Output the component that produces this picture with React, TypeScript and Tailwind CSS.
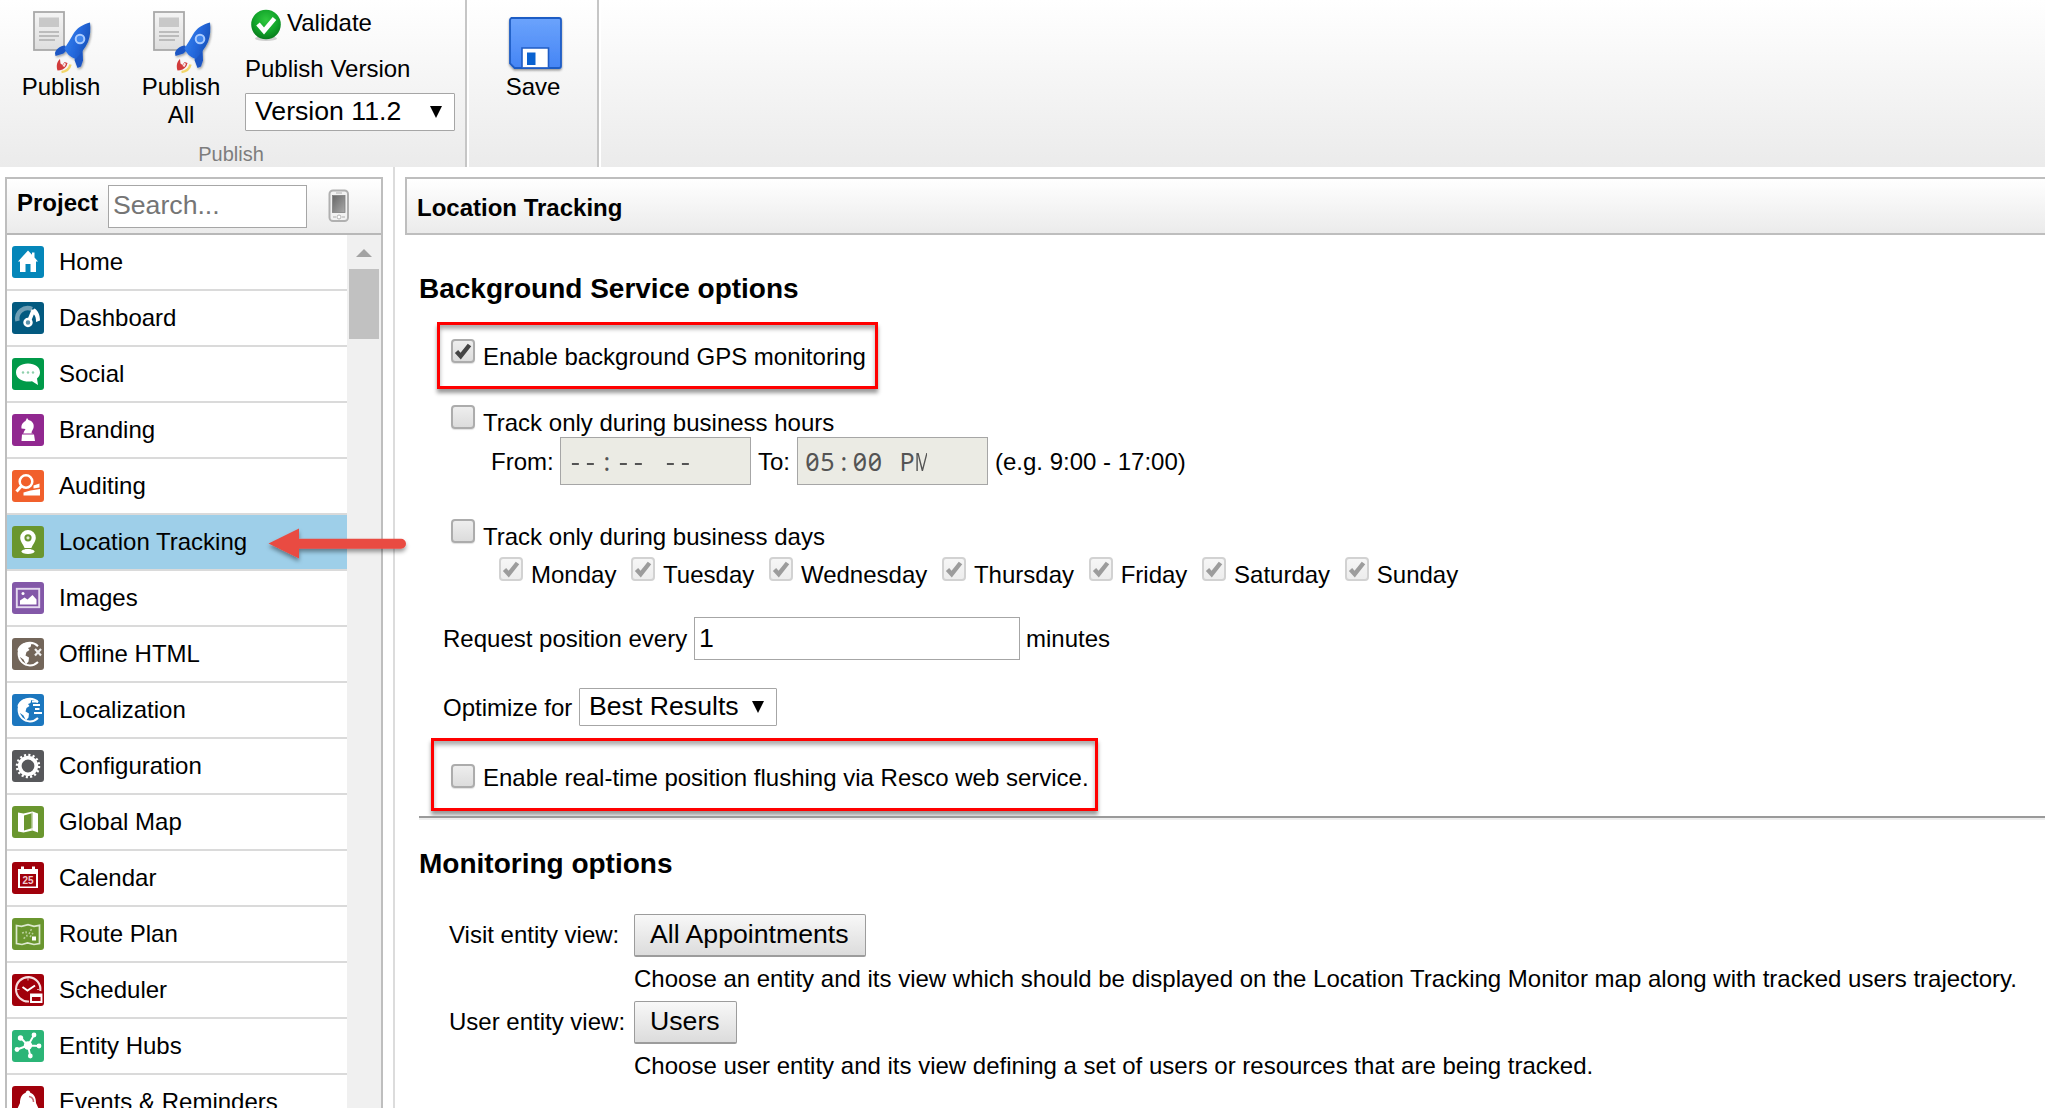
import React from 'react';

type IconProps = { children: React.ReactNode; bg: string };

function Tile({ children, bg }: IconProps) {
  return (
    <svg width="32" height="32" viewBox="0 0 32 32" className="shrink-0">
      <rect width="32" height="32" rx="3" fill={bg} />
      {children}
    </svg>
  );
}

const globe = (
  <>
    <path d="M26 8.200A11.300 11.300 0 1 0 26 24" fill="none" stroke="#fff" strokeWidth="2" />
    <path d="M5.500 12c1-4 4.500-7 9-7.500l5 1-1 3.500-2.500 1 1.500 2-3 2-1 3.500 3.500 2-.5 4-2.500 3-2.500-5-3.500-2.500z" fill="#fff" />
  </>
);

const items: { label: string; icon: React.ReactNode; active?: boolean }[] = [
  {
    label: 'Home',
    icon: (
      <Tile bg="#0486b9">
        <path d="M16 4.500 6 15.500h2V26h5.500v-8h5v8H24V15.500h2L22.500 11.500V6.500h-2.500v2.300z" fill="#fff" />
      </Tile>
    ),
  },
  {
    label: 'Dashboard',
    icon: (
      <Tile bg="#035a80">
        <path d="M5.500 19A10.500 10.500 0 0 1 20 7" fill="none" stroke="#6f9fb5" strokeWidth="4.500" />
        <path d="M19 9.500 22.500 6.500c3.500 2 5.500 6.500 5.500 12l-4 1.500c0-4-.5-6-2.500-8z" fill="#fff" />
        <path d="M21.500 8 17 19" stroke="#fff" strokeWidth="4" />
        <circle cx="16" cy="20.500" r="3.500" fill="#5e93ab" stroke="#fff" strokeWidth="2.500" />
      </Tile>
    ),
  },
  {
    label: 'Social',
    icon: (
      <Tile bg="#009a49">
        <path d="M16 5.500c7 0 12 3.500 12 9 0 2.500-1.200 4.500-3 6l1 6.500-6-3.700c-7.500 1.200-16-1.800-16-8.800 0-5.500 5-9 12-9z" fill="#fff" />
        <g fill="#8fd0ac"><circle cx="11" cy="14.500" r="1.200" /><circle cx="16" cy="14.500" r="1.200" /><circle cx="21" cy="14.500" r="1.200" /></g>
      </Tile>
    ),
  },
  {
    label: 'Branding',
    icon: (
      <Tile bg="#912890">
        <path d="M15 4l1.500 2c4 1 6 4 5 8-.5 2-2 3-2 5.500h-8c0-2 1.500-3 2-4.500l-4-.5c-.5-4 1.500-6 4-7.500z" fill="#fff" />
        <path d="M10 20.500h12l1 6.500H9.500z" fill="#fff" />
        <path d="M11 20h10" stroke="#c98cc8" strokeWidth="1" />
      </Tile>
    ),
  },
  {
    label: 'Auditing',
    icon: (
      <Tile bg="#f1602c">
        <circle cx="14" cy="11.500" r="6.300" fill="none" stroke="#fff" strokeWidth="2.500" />
        <path d="M9.500 16 4.500 21.500" stroke="#fff" strokeWidth="3" />
        <path d="M11.500 25.500v-3l7-2 9.500-1.500v6.500zM21.500 15.500l6-2v4l-6 1z" fill="#fff" />
      </Tile>
    ),
  },
  {
    label: 'Location Tracking',
    active: true,
    icon: (
      <Tile bg="#6a962f">
        <path d="M16 4a7.800 7.800 0 0 1 7.800 7.800c0 4-3.500 7-5 12h-5.600c-1.500-5-5-8-5-12A7.800 7.800 0 0 1 16 4z" fill="#fff" />
        <circle cx="16" cy="11.800" r="3.600" fill="#6a962f" />
        <circle cx="16" cy="11.800" r="1.600" fill="#dfe9d2" />
        <ellipse cx="16" cy="25.500" rx="6.500" ry="2.500" fill="#fff" />
        <path d="M12 22.500h8" stroke="#6a962f" strokeWidth="1" />
      </Tile>
    ),
  },
  {
    label: 'Images',
    icon: (
      <Tile bg="#8358a8">
        <rect x="4.800" y="6.800" width="22.400" height="18.400" fill="none" stroke="#e4d9ee" strokeWidth="1.900" />
        <path d="M8 22.500v-4l4.500-3 3 2 5-4.500 4 4.500v5z" fill="#fff" />
        <circle cx="11" cy="11.500" r="1.500" fill="#fff" />
      </Tile>
    ),
  },
  {
    label: 'Offline HTML',
    icon: (
      <Tile bg="#73665a">
        {globe}
        <path d="m23 11 6 6.500m0-6.500-6 6.500" stroke="#eee" strokeWidth="2.200" />
      </Tile>
    ),
  },
  {
    label: 'Localization',
    icon: (
      <Tile bg="#1c77bf">
        {globe}
        <path d="M20 7.500h6M21 11h7M23 15h4.500M22 19h8" stroke="#fff" strokeWidth="1.800" />
      </Tile>
    ),
  },
  {
    label: 'Configuration',
    icon: (
      <Tile bg="#57585b">
        <circle cx="16" cy="16" r="11" fill="none" stroke="#fff" strokeWidth="2.500" strokeDasharray="2.100 2.220" />
        <circle cx="16" cy="16" r="8.300" fill="none" stroke="#fff" strokeWidth="3.800" />
      </Tile>
    ),
  },
  {
    label: 'Global Map',
    icon: (
      <Tile bg="#6a962f">
        <path d="m6 6.500 5.500 1L20.500 5.500l5.500 2v19l-5.500-2-9 2-5.500-1z" fill="#fff" />
        <path d="m12 9.500 8.500-2.500v15L12 24.500z" fill="#6a962f" />
        <path d="M20 6v18" stroke="#d3e1c2" strokeWidth="1" />
      </Tile>
    ),
  },
  {
    label: 'Calendar',
    icon: (
      <Tile bg="#a1000b">
        <path d="M6 7h3V4.500h3V7h8V4.500h3V7h3v19H6z" fill="#fff" />
        <path d="M8 12h16v12.500H8z" fill="#a1000b" />
        <text x="16" y="22" textAnchor="middle" fontSize="10" fontWeight="700" fill="#f0cccf" fontFamily="Liberation Sans, sans-serif">25</text>
      </Tile>
    ),
  },
  {
    label: 'Route Plan',
    icon: (
      <Tile bg="#6a962f">
        <path d="m4.500 7.500 5 .8 6.500-1.600 6 1.600 5.500-1V25.500l-5.500 1-6.500-1.500-5.500 1.500-5.500-1z" fill="none" stroke="#dce8cd" strokeWidth="1.700" />
        <path d="m10 15 4-1 1 4-4 3m6-5 3-6m-2 9 3-4" fill="none" stroke="#b8cf9a" strokeWidth="1.500" strokeDasharray="2 1.500" />
        <rect x="20" y="18.500" width="4" height="4" fill="#fff" />
      </Tile>
    ),
  },
  {
    label: 'Scheduler',
    icon: (
      <Tile bg="#a1000b">
        <path d="M17 27.500A12.200 12.200 0 1 1 28.300 17" fill="none" stroke="#f6dfe0" strokeWidth="2.100" />
        <path d="m10.500 13 5 3.500L23 11.500" fill="none" stroke="#fff" strokeWidth="2" />
        <path d="M16 4v2.500M5 15.500h2.500M25 15.500h2" stroke="#dfa0a4" strokeWidth="1.200" />
        <path d="M19 20.500h10.500V28H19zM19 22h10.500" fill="none" stroke="#fff" strokeWidth="1.900" />
      </Tile>
    ),
  },
  {
    label: 'Entity Hubs',
    icon: (
      <Tile bg="#2bb577">
        <path d="m16 15.500 6-10.500M16 15.500 28 16M16 15.500 18.500 27M16 15.500 5 19.500M16 15.500 8.500 7.500" stroke="#fff" strokeWidth="1.900" />
        <circle cx="16" cy="15.500" r="4.200" fill="#fff" />
        <g fill="#fff"><circle cx="22" cy="5" r="2.400" /><circle cx="27" cy="16" r="2.400" /><circle cx="18.300" cy="26" r="2.400" /><circle cx="5" cy="19.500" r="2.400" /><circle cx="8.500" cy="8" r="2.700" /></g>
      </Tile>
    ),
  },
  {
    label: 'Events & Reminders',
    icon: (
      <Tile bg="#a1000b">
        <path d="M16 4.500c1.300 0 2 1 2.300 2.200C23 8.500 24 13 24 17l3 6.500H5L8 17c0-4 1-8.500 5.700-10.300C14 5.500 14.700 4.500 16 4.500z" fill="#fff" />
        <path d="M17 10.500c3 .5 4.500 2.500 4.500 5.500" fill="none" stroke="#c46a70" strokeWidth="1.500" />
      </Tile>
    ),
  },
];

function PublishIcon() {
  return (
    <svg width="64" height="66" viewBox="0 0 64 66">
      <defs>
        <linearGradient id="doc" x1="0" y1="0" x2="0" y2="1">
          <stop offset="0" stopColor="#f4f4f4" />
          <stop offset="1" stopColor="#dedede" />
        </linearGradient>
        <linearGradient id="hull" x1="0" y1="0.300" x2="1" y2="0.700">
          <stop offset="0" stopColor="#3580ee" />
          <stop offset="0.500" stopColor="#2468dc" />
          <stop offset="1" stopColor="#174fb4" />
        </linearGradient>
        <filter id="soft" x="-20%" y="-20%" width="150%" height="150%">
          <feDropShadow dx="1" dy="1.500" stdDeviation="1.300" floodOpacity="0.350" />
        </filter>
      </defs>
      <rect x="2" y="1" width="30" height="38" fill="url(#doc)" stroke="#a9a9a9" strokeWidth="1.800" />
      <rect x="7" y="6.500" width="20" height="9.500" fill="#c8c8c8" />
      <path d="M7 21h20M7 25h20M7 29h16" stroke="#adadad" strokeWidth="1.500" />
      <g filter="url(#soft)">
        <path d="M33 34.500c-5 .5-9 3.500-10 7.500l.5 3 8-2.500 4-4z" fill="#1b57c4" />
        <path d="m50.500 37.500.5 12-2 6-3.500 1.500-3-8 2-6z" fill="#1b57c4" />
        <path d="M58 11.500c-7 2-13.500 5.500-17 12-3 5-5.500 9.500-8.500 14 2 5 5.500 8.500 11 10.500 5-5 9.500-10.500 12.500-17 2.300-6 2.800-12.500 2-19.500z" fill="url(#hull)" />
        <circle cx="48" cy="28" r="4.300" fill="#3f86ee" stroke="#a9cbff" strokeWidth="2" />
      </g>
      <path d="M28 48c-3 2.500-4 6.500-2.500 11.500 3.500 0 7-1.500 9-4.500l1-3-3-1-2 3-2-1.500z" fill="#d13b3b" />
      <path d="m30.500 55 2-3.500 1.500 1.500-1.500 3z" fill="#f6e3e3" />
      <path d="M29.500 61c4.500-.5 8-3.500 9-7.500" fill="none" stroke="#f3d66a" strokeWidth="2.500" />
    </svg>
  );
}

function ValidIcon() {
  return (
    <svg width="32" height="33" viewBox="0 0 32 33">
      <defs>
        <radialGradient id="ok" cx="0.500" cy="0.350" r="0.650">
          <stop offset="0" stopColor="#2fc83e" />
          <stop offset="0.600" stopColor="#12a42a" />
          <stop offset="1" stopColor="#087a1c" />
        </radialGradient>
      </defs>
      <ellipse cx="16" cy="29.500" rx="11" ry="2.500" fill="#cfcfcf" />
      <circle cx="16" cy="15.500" r="14.800" fill="url(#ok)" />
      <path d="m8 15 6 7L24.500 9.500" fill="none" stroke="#fff" strokeWidth="4.600" />
    </svg>
  );
}

function SaveIcon() {
  return (
    <svg width="60" height="58" viewBox="0 0 60 58">
      <defs>
        <linearGradient id="disk" x1="0" y1="0" x2="0" y2="1">
          <stop offset="0" stopColor="#6ba3fc" />
          <stop offset="1" stopColor="#4585f5" />
        </linearGradient>
        <filter id="diskShadow" x="-10%" y="-10%" width="125%" height="125%">
          <feDropShadow dx="0" dy="1.500" stdDeviation="1.200" floodOpacity="0.400" />
        </filter>
      </defs>
      <g filter="url(#diskShadow)">
        <path d="M6 3h48a2 2 0 0 1 2 2v46a2 2 0 0 1-2 2H9.500L5 48.500V5a2 2 0 0 1 2-2z" fill="url(#disk)" stroke="#1f5cc4" strokeWidth="1.800" />
      </g>
      <path d="M17 52.500V33h26.500v19.500" fill="#fff" stroke="#1f5cc4" strokeWidth="1.600" />
      <rect x="22" y="37.500" width="8.500" height="12.500" fill="#0a62d0" />
      <path d="M16.500 53h27.500" stroke="#1f5cc4" strokeWidth="1.400" />
    </svg>
  );
}

function PhoneIcon() {
  return (
    <svg width="22" height="34" viewBox="0 0 22 34">
      <defs>
        <linearGradient id="screen" x1="0" y1="0" x2="1" y2="1">
          <stop offset="0" stopColor="#666" />
          <stop offset="1" stopColor="#aaa" />
        </linearGradient>
      </defs>
      <rect x="1.500" y="1.500" width="18.500" height="30.500" rx="3.500" fill="#f2f2f2" stroke="#b0b0b0" strokeWidth="2" />
      <rect x="4.500" y="6.500" width="12.500" height="17" fill="url(#screen)" stroke="#808080" strokeWidth="0.800" />
      <path d="M8 4h6" stroke="#bbb" strokeWidth="1.200" />
      <circle cx="11" cy="28" r="2" fill="#fff" stroke="#b5b5b5" strokeWidth="1" />
      <path d="M5 28h3M14 28h3" stroke="#c5c5c5" strokeWidth="1.500" />
    </svg>
  );
}

function Check({ checked = false, disabled = false }: { checked?: boolean; disabled?: boolean }) {
  return (
    <span
      className={
        'flex h-6 w-6 shrink-0 items-center justify-center rounded-[4px] border-2 bg-gradient-to-b ' +
        (disabled
          ? 'border-[#d2d2d2] from-[#f6f6f6] to-[#ededed]'
          : 'border-[#acacac] from-[#eeeeee] to-[#dcdcdc] shadow-[0_1px_1px_rgba(0,0,0,0.12)]')
      }
    >
      {checked && (
        <svg width="20" height="20" viewBox="0 0 20 20">
          <path d="m3.500 10.500 4.200 4.700L16.500 4" fill="none" stroke={disabled ? '#9c9c9c' : '#444'} strokeWidth="4.400" />
        </svg>
      )}
    </span>
  );
}

function SelectBox({ label, className }: { label: string; className: string }) {
  return (
    <div className={'flex h-[38px] items-start justify-between rounded-[1px] border border-[#a6a6a6] bg-white pl-[9px] pr-3 text-[26.67px] leading-[34px] ' + className}>
      <span>{label}</span>
      <svg width="12" height="12" viewBox="0 0 12 12" className="mt-3">
        <path d="M0 0h12L6 12z" fill="#000" />
      </svg>
    </div>
  );
}

function charCell(c: string) {
  if (c === ':') return 'w-[17.5px]';
  if (c === ' ') return 'w-[17px]';
  if (c === '-') return 'w-[15px] scale-x-[1.15]';
  if (c === 'M') return 'w-[15px] scale-x-[0.68]';
  return 'w-[15px]';
}

function TimeBox({ value }: { value: string }) {
  return (
    <div className="h-12 w-[191px] border border-[#a6a6a6] bg-[#ebebe4] pl-[7px]">
      <div className="flex w-[122px] overflow-hidden pt-[5px] font-['Noto_Sans','Open_Sans',sans-serif] text-[25px] leading-[36px] text-[#545454] [font-feature-settings:'zero'_1]">
        {value.split('').map((c, i) => (
          <span key={i} className={'flex shrink-0 justify-center whitespace-pre ' + charCell(c)}>
            {c}
          </span>
        ))}
      </div>
    </div>
  );
}

const days = ['Monday', 'Tuesday', 'Wednesday', 'Thursday', 'Friday', 'Saturday', 'Sunday'];

function Ribbon() {
  return (
    <header className="flex h-[167px] shrink-0 bg-gradient-to-b from-white to-[#ebebeb]">
      <div className="flex w-[467px] flex-col border-r-2 border-[#c6c6c6]">
        <div className="flex h-[143px]">
          <div className="flex w-[122px] flex-col items-center pt-[11px]">
            <span className="flex pl-[5px]">
              <PublishIcon />
            </span>
            <span className="-mt-1">Publish</span>
          </div>
          <div className="flex w-[118px] flex-col items-center pt-[11px] text-center">
            <span className="flex pl-[5px]">
              <PublishIcon />
            </span>
            <span className="-mt-1 w-20">Publish All</span>
          </div>
          <div className="ml-[5px] w-[210px]">
            <div className="flex items-start gap-[5px] pl-[5px] pt-[9px]">
              <ValidIcon />
              <span>Validate</span>
            </div>
            <div className="mt-[13px]">Publish Version</div>
            <SelectBox label="Version 11.2" className="mt-[10px] w-[210px]" />
          </div>
        </div>
        <div className="-mt-px pr-[3px] text-center text-[20px] leading-6 text-[#7d7d7d]">Publish</div>
      </div>
      <div className="flex w-[132px] flex-col items-center border-r-2 border-l-2 border-l-white border-r-[#c6c6c6] pt-[15px]">
        <span className="flex pl-[4px]">
          <SaveIcon />
        </span>
        <span>Save</span>
      </div>
      <div className="flex-1 border-l-2 border-white" />
    </header>
  );
}

function Sidebar() {
  return (
    <aside className="ml-[5px] mt-[10px] flex w-[378px] shrink-0 flex-col border-2 border-b-0 border-[#bebebe]">
      <div className="flex h-14 shrink-0 items-start border-b-2 border-[#b8b8b8] bg-gradient-to-b from-white to-[#ebebeb]">
        <span className="ml-[10px] mt-[10px] w-[91px] font-bold">Project</span>
        <input
          placeholder="Search..."
          className="mt-[6px] h-[43px] w-[199px] border border-[#a6a6a6] bg-white px-1 pb-[2px] text-[26.67px] placeholder:text-[#757575]"
        />
        <span className="ml-[21px] mt-[10px]">
          <PhoneIcon />
        </span>
      </div>
      <div className="flex min-h-0 flex-1">
        <nav className="w-[340px] overflow-hidden">
          {items.map((it) => (
            <div
              key={it.label}
              className={'flex h-14 items-start border-b-2 border-[#dadada] pl-[5px] pt-[11px] ' + (it.active ? 'bg-[#9ecfe9]' : 'bg-white')}
            >
              {it.icon}
              <span className="ml-[15px] mt-[2px] whitespace-nowrap">{it.label}</span>
            </div>
          ))}
        </nav>
        <div className="flex w-[34px] flex-col items-center bg-[#f0f0f0] pt-[14px]">
          <svg width="16" height="8" viewBox="0 0 16 8">
            <path d="M0 8h16L8 0z" fill="#a3a3a3" />
          </svg>
          <div className="mt-3 h-[70px] w-[30px] bg-[#c1c1c1]" />
        </div>
      </div>
    </aside>
  );
}

const highlight =
  'flex items-start border-[3px] border-[#ff0000] shadow-[0_4px_4px_rgba(0,0,0,0.4),inset_0_4px_4px_rgba(0,0,0,0.32)]';

function EntityRow({ label, button, hint }: { label: string; button: string; hint: string }) {
  return (
    <div className="ml-[44px]">
      <div className="flex h-[43px] items-start">
        <span className="w-[185px] pt-[7px]">{label}</span>
        <button className="h-[43px] rounded-[2px] border border-b-2 border-[#9c9c9c] bg-gradient-to-b from-[#f8f8f8] to-[#dcdcdc] pl-[15px] pr-4 pb-[2px] text-[26.67px] leading-[36px]">
          {button}
        </button>
      </div>
      <p className="ml-[185px] h-[44px] whitespace-nowrap pt-2">{hint}</p>
    </div>
  );
}

function Content() {
  return (
    <main className="ml-[10px] mt-[10px] min-w-0 flex-1">
      <div className="h-[58px] border-2 border-r-0 border-[#bebebe] bg-gradient-to-b from-white to-[#ebebeb] pl-[10px] pt-[15px] font-bold">
        Location Tracking
      </div>
      <section className="flex flex-col items-start">
        <h2 className="ml-[14px] mt-[38px] text-[28px] font-bold leading-8">Background Service options</h2>
        <label className={highlight + ' ml-8 mt-[17px] h-[67px] w-[441px] pl-[11px] pt-[14px]'}>
          <Check checked />
          <span className="ml-2 mt-1 whitespace-nowrap">Enable background GPS monitoring</span>
        </label>
        <label className="ml-[46px] flex h-12 items-start pt-4">
          <Check />
          <span className="ml-2 mt-1">Track only during business hours</span>
        </label>
        <div className="ml-[86px] flex h-12 items-start leading-[50px]">
          <span className="w-[69px]">From:</span>
          <TimeBox value="--:-- --" />
          <span className="w-[46px] pl-[7px]">To:</span>
          <TimeBox value="05:00 PM" />
          <span className="ml-[7px]">(e.g. 9:00 - 17:00)</span>
        </div>
        <label className="ml-[46px] flex h-[66px] items-start pt-[34px]">
          <Check />
          <span className="ml-2 mt-1">Track only during business days</span>
        </label>
        <div className="ml-[94px] flex h-[66px] items-start gap-[14.7px] pt-[6px]">
          {days.map((d) => (
            <label key={d} className="flex items-start gap-2">
              <Check checked disabled />
              <span className="mt-1">{d}</span>
            </label>
          ))}
        </div>
        <div className="ml-[38px] flex h-[43px] items-start">
          <span className="w-[251px] pt-2">Request position every</span>
          <input defaultValue="1" className="h-[43px] w-[326px] border border-[#a6a6a6] px-1 text-[26.67px]" />
          <span className="ml-[6px] pt-2">minutes</span>
        </div>
        <div className="ml-[38px] mt-7 flex h-[38px] items-start">
          <span className="w-[136px] pt-[6px]">Optimize for</span>
          <SelectBox label="Best Results" className="w-[198px]" />
        </div>
        <label className={highlight + ' ml-[26px] mt-3 h-[73px] w-[667px] pl-[17px] pt-[23px]'}>
          <Check />
          <span className="ml-2 whitespace-nowrap">Enable real-time position flushing via Resco web service.</span>
        </label>
        <hr className="ml-[14px] mt-[5px] h-1 self-stretch border-b-2 border-t-2 border-b-[#eeeeee] border-t-[#9a9a9a]" />
        <h2 className="ml-[14px] mt-7 text-[28px] font-bold leading-8">Monitoring options</h2>
        <div className="mt-[34px]">
          <EntityRow
            label="Visit entity view:"
            button="All Appointments"
            hint="Choose an entity and its view which should be displayed on the Location Tracking Monitor map along with tracked users trajectory."
          />
          <EntityRow
            label="User entity view:"
            button="Users"
            hint="Choose user entity and its view defining a set of users or resources that are being tracked."
          />
        </div>
      </section>
    </main>
  );
}

export default function App() {
  return (
    <div className="relative flex h-[1108px] w-full flex-col overflow-hidden bg-white font-['Liberation_Sans',Arial,sans-serif] text-[24px] leading-[28px] text-black">
      <Ribbon />
      <div className="flex min-h-0 flex-1">
        <Sidebar />
        <div className="ml-[10px] w-[2px] shrink-0 bg-[#dcdcdc]" />
        <Content />
      </div>
      <svg className="absolute left-[262px] top-[522px]" width="154" height="48" viewBox="0 0 154 48">
        <defs>
          <filter id="arrowShadow" x="-10%" y="-20%" width="120%" height="160%">
            <feDropShadow dx="0" dy="3" stdDeviation="2" floodOpacity="0.400" />
          </filter>
        </defs>
        <path d="M6.500 21.500 37 6.500v10.200h102a5 5 0 0 1 0 10H37v9.800z" fill="#e94b43" filter="url(#arrowShadow)" />
      </svg>
    </div>
  );
}
